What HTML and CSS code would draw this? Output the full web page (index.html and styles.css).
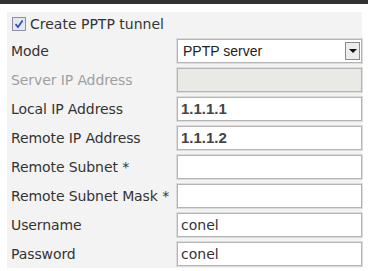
FILE: index.html
```html
<!DOCTYPE html>
<html lang="en">
  <head>
    <meta charset="UTF-8" />
    <title>PPTP</title>
    <link rel="stylesheet" href="styles.css">
  </head>
  <body>
    <div class="topbar"></div>
    <div class="panel">
      <label class="check-row">
        <span class="checkbox">
          <svg width="10" height="10" viewBox="0 0 10 10">
            <path d="M1.5 5.2 L4 8 L8.6 1.4" fill="none" stroke="#2f55b8" stroke-width="1.8" />
          </svg>
        </span>
        Create PPTP tunnel
      </label>
      <div class="form">
        <div class="label">Mode</div>
        <div class="select">
          <span class="select-text">PPTP server</span>
          <span class="arrow"></span>
        </div>

        <div class="label disabled">Server IP Address</div>
        <input class="field" type="text" disabled />

        <div class="label">Local IP Address</div>
        <input class="field ip" type="text" value="1.1.1.1" />

        <div class="label">Remote IP Address</div>
        <input class="field ip" type="text" value="1.1.1.2" />

        <div class="label">Remote Subnet *</div>
        <input class="field" type="text" />

        <div class="label">Remote Subnet Mask *</div>
        <input class="field" type="text" />

        <div class="label">Username</div>
        <input class="field" type="text" value="conel" />

        <div class="label">Password</div>
        <input class="field" type="text" value="conel" />
      </div>
    </div>
  </body>
</html>
```

FILE: styles.css
```css
body {
  margin: 0;
  background-color: #fff;
  font-family: "DejaVu Sans", Verdana, sans-serif;
  color: #333;
}
.topbar {
  height: 4px;
  background-color: #333;
}
.panel {
  margin: 8px 6px 0 7px;
  height: 256px;
  background-color: #f3f3f3;
  padding: 0 0 0 4px;
  box-sizing: border-box;
}
.check-row {
  display: flex;
  align-items: center;
  height: 24px;
  font-size: 14px;
  gap: 4px;
  padding-left: 1px;
}
.checkbox {
  width: 12px;
  height: 12px;
  border: 1px solid #8f8f9f;
  background-color: #e4e8f2;
  display: flex;
  align-items: center;
  justify-content: center;
}
.form {
  display: grid;
  grid-template-columns: 166px 185px;
  grid-auto-rows: 29px;
  align-items: center;
}
.label {
  font-size: 14px;
  white-space: nowrap;
  letter-spacing: -0.1px;
}
.label.disabled {
  color: #a0a0a0;
}
.field {
  width: 185px;
  height: 24px;
  box-sizing: border-box;
  margin: 0;
  padding: 0 3px;
  border: 1px solid #b4b4b4;
  box-shadow: 0 0 0 1px #dcdcdc;
  background-color: #fff;
  font-family: "DejaVu Sans", Verdana, sans-serif;
  font-size: 14px;
  color: #333;
  outline: none;
}
.field.ip {
  font-family: "Liberation Sans", Arial, sans-serif;
  font-size: 15px;
  font-weight: bold;
  color: #444;
}
.field:disabled {
  background-color: #e9e9e6;
}
.select {
  width: 185px;
  height: 24px;
  box-sizing: border-box;
  border: 1px solid #b4b4b4;
  box-shadow: 0 0 0 1px #dcdcdc;
  background-color: #fff;
  display: flex;
  align-items: center;
  justify-content: space-between;
  padding: 0 1px 0 5px;
}
.select-text {
  font-family: "Liberation Sans", Arial, sans-serif;
  font-size: 14px;
  color: #222;
}
.arrow {
  width: 15px;
  height: 18px;
  box-sizing: border-box;
  border: 1px solid #8a8a8a;
  background-color: #ececec;
  display: flex;
  align-items: center;
  justify-content: center;
}
.arrow::after {
  content: "";
  border-left: 4px solid transparent;
  border-right: 4px solid transparent;
  border-top: 4px solid #111;
}
```
